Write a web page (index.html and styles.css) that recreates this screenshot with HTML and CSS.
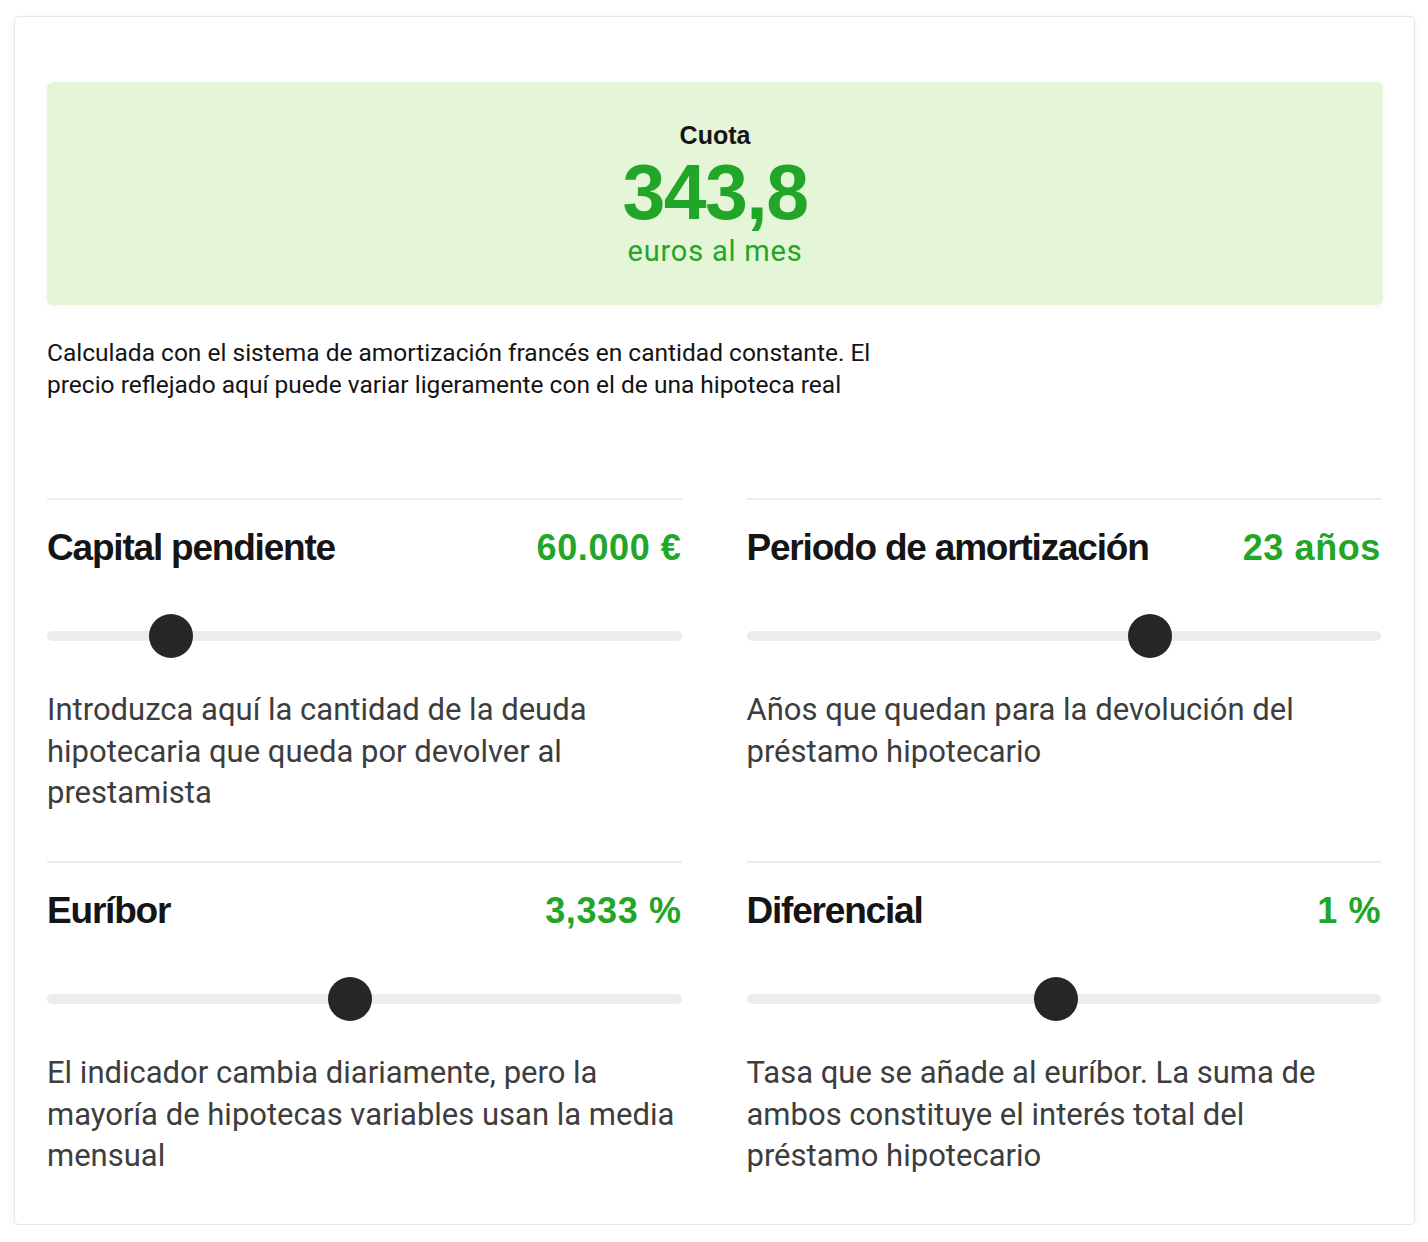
FILE: index.html
```html
<!DOCTYPE html>
<html lang="es">
<head>
<meta charset="utf-8">
<title>Calculadora hipoteca</title>
<link rel="stylesheet" href="styles.css">
</head>
<body>
<div class="card">
  <div class="result">
    <div class="result-label">Cuota</div>
    <div class="result-value">343,8</div>
    <div class="result-unit">euros al mes</div>
  </div>
  <p class="note">Calculada con el sistema de amortización francés en cantidad constante. El precio reflejado aquí puede variar ligeramente con el de una hipoteca real</p>
  <div class="controls">
    <div class="control">
      <div class="control-head"><span class="control-title">Capital pendiente</span><span class="control-value">60.000 €</span></div>
      <div class="slider"><div class="track"></div><div class="thumb" style="left: 16.06%"></div></div>
      <p class="control-desc">Introduzca aquí la cantidad de la deuda hipotecaria que queda por devolver al prestamista</p>
    </div>
    <div class="control">
      <div class="control-head"><span class="control-title">Periodo de amortización</span><span class="control-value">23 años</span></div>
      <div class="slider"><div class="track"></div><div class="thumb" style="left: 60.1%"></div></div>
      <p class="control-desc">Años que quedan para la devolución del préstamo hipotecario</p>
    </div>
    <div class="control">
      <div class="control-head"><span class="control-title">Euríbor</span><span class="control-value">3,333 %</span></div>
      <div class="slider"><div class="track"></div><div class="thumb" style="left: 44.25%"></div></div>
      <p class="control-desc">El indicador cambia diariamente, pero la mayoría de hipotecas variables usan la media mensual</p>
    </div>
    <div class="control">
      <div class="control-head"><span class="control-title">Diferencial</span><span class="control-value">1 %</span></div>
      <div class="slider"><div class="track"></div><div class="thumb" style="left: 45.27%"></div></div>
      <p class="control-desc">Tasa que se añade al euríbor. La suma de ambos constituye el interés total del préstamo hipotecario</p>
    </div>
  </div>
</div>
</body>
</html>
```

FILE: styles.css
```css
* { box-sizing: border-box; }
html, body { margin: 0; padding: 0; background: #ffffff; }
body { font-family: Roboto, "Liberation Sans", Arial, sans-serif; color: #111; }

.card {
  margin: 16px 0 0 14px;
  width: 1401px;
  border: 1px solid #e6e6e6;
  border-radius: 5px;
  box-shadow: 0 3px 10px rgba(0,0,0,0.06);
  padding: 65px 31px 47px 32px;
  background: #fff;
}

.result {
  background: #e5f5d7;
  border-radius: 6px;
  height: 223px;
  display: flex;
  flex-direction: column;
  align-items: center;
  padding-top: 38px;
  box-shadow: 0 2px 6px rgba(0,0,0,0.04);
}
.result-label {
  font-family: "Liberation Sans", Arial, sans-serif;
  font-weight: 700;
  font-size: 25px;
  line-height: 30px;
  color: #151515;
}
.result-value {
  font-family: "Liberation Sans", Arial, sans-serif;
  font-weight: 700;
  font-size: 77px;
  line-height: 76px;
  letter-spacing: -1.5px;
  color: #22a628;
  margin-top: 4px;
}
.result-unit {
  font-size: 29px;
  line-height: 36px;
  letter-spacing: 0.8px;
  color: #22a628;
  margin-top: 3px;
}

.note {
  margin: 32px 0 0 0;
  max-width: 870px;
  font-size: 24.5px;
  line-height: 32px;
  color: #141414;
}

.controls {
  margin-top: 97px;
  margin-right: 2px;
  display: grid;
  grid-template-columns: 1fr 1fr;
  column-gap: 65px;
  row-gap: 47px;
}
.control {
  border-top: 2px solid #ececec;
  padding-top: 28px;
}
.control-head {
  display: flex;
  justify-content: space-between;
  align-items: center;
  height: 40px;
}
.control-title {
  font-family: "Liberation Sans", Arial, sans-serif;
  font-weight: 700;
  font-size: 37px;
  letter-spacing: -1.2px;
  color: #151515;
}
.control-value {
  font-family: "Liberation Sans", Arial, sans-serif;
  font-weight: 700;
  font-size: 36px;
  letter-spacing: 0.6px;
  color: #22a628;
}
.slider {
  position: relative;
  height: 44px;
  margin-top: 46px;
}
.track {
  position: absolute;
  left: 0;
  right: 0;
  top: 17px;
  height: 10px;
  border-radius: 5px;
  background: #ececec;
}
.thumb {
  position: absolute;
  top: 0;
  width: 44px;
  height: 44px;
  border-radius: 50%;
  background: #262626;
}
.control-desc {
  margin: 31px 0 0 0;
  font-size: 31px;
  line-height: 41.5px;
  color: #3d3d3d;
  min-height: 125px;
}
```
